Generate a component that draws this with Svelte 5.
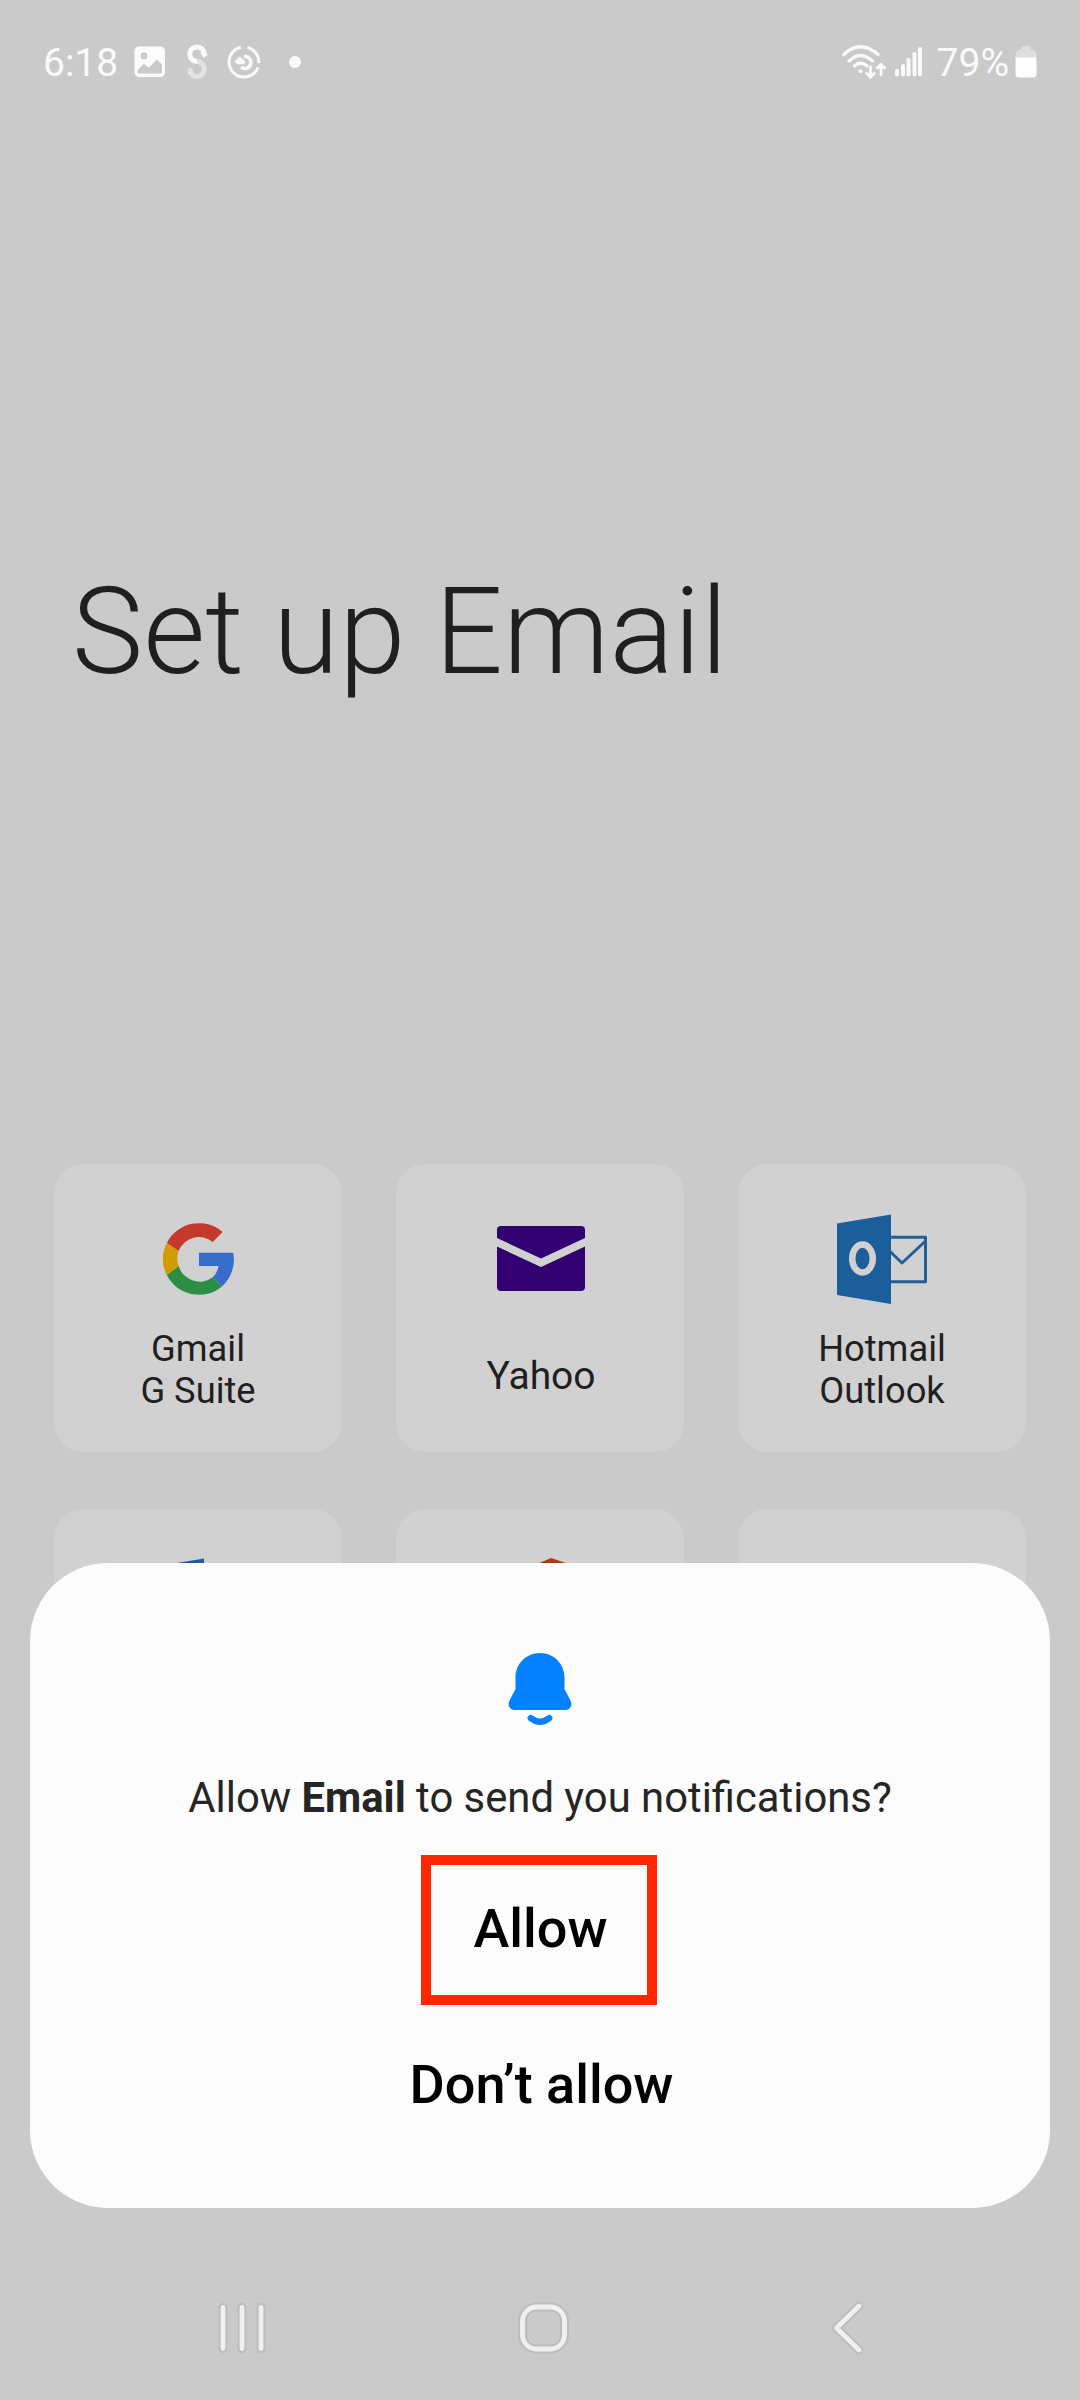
<script lang="ts">
  const providers = [
    { id: 'google', lines: ['Gmail', 'G Suite'] },
    { id: 'yahoo', lines: ['Yahoo'] },
    { id: 'outlook', lines: ['Hotmail', 'Outlook'] },
    { id: 'exchange', lines: [] },
    { id: 'office', lines: [] },
    { id: 'other', lines: [] },
  ];
</script>

<div class="screen">
  <header class="status-bar">
    <div class="status-left">
      <span class="time">6:18</span>
      <svg class="picture" width="32" height="32" viewBox="0 0 32 32">
        <path fill="#fcfcfc" fill-rule="evenodd" d="M5 0.5h21.500a4.500 4.500 0 0 1 4.500 4.500v21.500a4.500 4.500 0 0 1-4.500 4.500H5a4.500 4.500 0 0 1-4.500-4.500V5A4.500 4.500 0 0 1 5 .5zM10 6.500a3.400 3.400 0 1 0 0 6.800 3.400 3.400 0 0 0 0-6.800zM3.500 24v2q0 1.500 1.500 1.500h21.500q1.500 0 1.500-1.500V18.500l-5.300-5-8 8.200-4.700-4z"/>
      </svg>
      <svg class="swirl" width="22" height="36" viewBox="0 0 22 36">
        <path d="M11 17.500a7.500 7.500 0 1 1-3.500 14.300l-4.500-5" fill="none" stroke="#e3e3e3" stroke-width="5"/>
        <path d="M0 26.500l4-3.500 4 4z" fill="#e3e3e3"/>
        <path d="M11 17.500A7.300 7.300 0 1 1 18.300 10" fill="none" stroke="#fafafa" stroke-width="5"/>
        <path d="M14 8l8 2.500-4.500 3.500z" fill="#fafafa"/>
      </svg>
      <svg class="sync" width="34" height="34" viewBox="0 0 34 34" fill="none" stroke="#fafafa" stroke-width="3">
        <path d="M13.800 2.300A15 15 0 1 0 31 22.500M20.500 2.400A15 15 0 0 1 31.800 18"/>
        <path d="M17 11.500a6 6 0 1 1-3 10.500" stroke-width="3.600"/>
        <path d="M17.500 18.500l-4.500-4" stroke-width="3.200"/>
        <path d="M7.500 16.500l5-5 5.500 4.500-2 3-5.500.5z" fill="#fafafa" stroke="none"/>
      </svg>
      <span class="dot"></span>
    </div>
    <div class="status-right">
      <svg width="44" height="34" viewBox="0 0 44 34" fill="none" stroke="#fafafa" stroke-width="3.200" stroke-linecap="round">
        <path d="M1.800 9.500Q18.500-6 36 9.500M7 16Q18.500 5 30.500 16M12.500 21Q18.500 15.500 25 21"/>
        <circle cx="18.500" cy="26.300" r="2" fill="#fafafa" stroke="none"/>
        <path d="M28.500 22v10M24.800 28.500l3.700 3.700 3.700-3.700M39 30V19.500M35.300 23l3.700-3.700 3.700 3.700" stroke-width="2.800"/>
      </svg>
      <svg class="signal" width="28" height="30" viewBox="0 0 28 30" fill="#fafafa">
        <rect x="0" y="22" width="4" height="7.500" rx="1.800"/>
        <rect x="6" y="17" width="4" height="12.500" rx="1.800"/>
        <rect x="11.500" y="11" width="4" height="18.500" rx="1.800"/>
        <rect x="17.500" y="5" width="4" height="24.500" rx="1.800"/>
        <rect x="23" y="0" width="4" height="29.500" rx="1.800"/>
      </svg>
      <span class="percent">79%</span>
      <svg class="battery" width="22" height="32" viewBox="0 0 22 32">
        <path fill="#dedede" d="M6 4V2q0-2 2-2h6q2 0 2 2v2h1.500Q21.500 5 21.500 9v3H.5V9Q.5 5 4 4z"/>
        <path fill="#fdfdfd" d="M.5 11.500h21V28q0 3.500-3.500 3.500H4Q.5 31.500.5 28z"/>
      </svg>
    </div>
  </header>

  <h1>Set up Email</h1>

  <main class="providers">
    {#each providers as provider (provider.id)}
      <div class="card">
        <div class="icon" class:cut={provider.lines.length === 0}>
          {#if provider.id === 'google'}
            <svg width="72" height="72" viewBox="0 0 72 72">
              <path fill="#c5382c" d="M4.800 19.900A36 36 0 0 1 60.600 9L50.800 19A22 22 0 0 0 16.500 28.100z"/>
              <path fill="#d09c04" d="M4.800 19.900a36 36 0 0 0 0 32.200l11.900-8.800a22 22 0 0 1-.2-15.200z"/>
              <path fill="#2b8e44" d="M4.800 52.100A36 36 0 0 0 60 63.500L50.500 54.500A22 22 0 0 1 16.700 43.300z"/>
              <path fill="#366dcb" d="M37 29.700h34.200A36 36 0 0 1 60 63.500L50.500 54.500Q55.500 50 56.500 43H37z"/>
            </svg>
          {:else if provider.id === 'yahoo'}
            <svg class="envelope" width="88" height="65" viewBox="0 0 88 65" fill="#330072">
              <path d="M0 12V4q0-4 4-4h80q4 0 4 4v8L44 32.500z"/>
              <path d="M0 20.500L44 41l44-20.500V61q0 4-4 4H4q-4 0-4-4z"/>
            </svg>
          {:else if provider.id === 'outlook' || provider.id === 'exchange'}
            <svg class={provider.id} width="90" height="90" viewBox="0 0 90 90">
              <path d="M50 23.300h38.500v44.500H50M50 34.500l15 14.500L88 27.500" fill="none" stroke="#225f99" stroke-width="3" stroke-linejoin="round"/>
              <path fill="#1b5e9b" d="M0 9.500L54 .5v89.500L0 81z"/>
              <ellipse cx="25.500" cy="44.500" rx="10.300" ry="13.900" fill="none" stroke="#d1d1d1" stroke-width="6.500"/>
            </svg>
          {:else if provider.id === 'office'}
            <svg width="76" height="90" viewBox="0 0 76 90">
              <path fill="#ab3c18" d="M0 21L49 0l27 9v72l-27 9L0 69l49 6V16L17 24v38L0 69z"/>
            </svg>
          {/if}
        </div>
        <div class="label" class:single={provider.lines.length === 1}>
          {#each provider.lines as line}
            <span>{line}</span>
          {/each}
        </div>
      </div>
    {/each}
  </main>

  <nav class="nav-bar">
    <button aria-label="Recents">
      <svg width="56" height="60" viewBox="0 0 56 60" fill="none" stroke-linecap="round">
        <path class="edge" d="M9 9.500v41M28 9.500v41M47 9.500v41"/>
        <path class="line" d="M9 9.500v41M28 9.500v41M47 9.500v41"/>
      </svg>
    </button>
    <button aria-label="Home">
      <svg width="56" height="60" viewBox="0 0 56 60" fill="none">
        <rect class="edge" x="5.500" y="9" width="42" height="42" rx="14"/>
        <rect class="line" x="5.500" y="9" width="42" height="42" rx="14"/>
      </svg>
    </button>
    <button aria-label="Back">
      <svg width="56" height="60" viewBox="0 0 56 60" fill="none" stroke-linecap="round" stroke-linejoin="round">
        <path class="edge" d="M39 8L16.500 30 39 52"/>
        <path class="line" d="M39 8L16.500 30 39 52"/>
      </svg>
    </button>
  </nav>

  <div class="dialog" role="dialog" aria-label="Notifications">
    <svg class="bell" width="64" height="74" viewBox="0 0 64 74">
      <path fill="#0381fe" d="M32 0C18 0 7.500 11 7.500 24.500V36L1.500 47.500C-1 52.500 2 57 6.500 57h51c4.500 0 7.500-4.500 5-9.500L56.500 36V24.500C56.500 11 46 0 32 0z"/>
      <path d="M22.800 65.200Q32 72.200 41.200 65.200" fill="none" stroke="#0381fe" stroke-width="6.400" stroke-linecap="round"/>
    </svg>
    <p>Allow <b>Email</b> to send you notifications?</p>
    <button class="allow">Allow</button>
    <button class="deny">Don’t allow</button>
  </div>
</div>

<style>
:global(body) {
  background: #cacaca;
}

.screen {
  position: relative;
  display: flex;
  flex-direction: column;
  width: 1080px;
  height: 2400px;
  overflow: hidden;
  background: #cacaca;
  color: #1f1f1f;
  font-family: Roboto, sans-serif;
}

button {
  padding: 0;
  border: none;
  background: none;
  font-family: inherit;
}

svg {
  display: block;
  flex: none;
}

/* Status bar */
.status-bar {
  display: flex;
  justify-content: space-between;
  height: 124px;
  box-sizing: border-box;
  padding: 0 43px;
  color: #fafafa;
  font-size: 39px;
}

.status-left,
.status-right {
  display: flex;
  align-items: center;
  height: 124px;
}

.time,
.percent {
  padding-top: 1px;
}

.picture {
  margin-left: 16px;
}

.swirl {
  margin-left: 20px;
}

.sync {
  margin-left: 19px;
}

.dot {
  width: 12px;
  height: 12px;
  margin-left: 28px;
  border-radius: 50%;
  background: #fafafa;
}

.signal {
  margin-left: 9px;
}

.percent {
  margin-left: 14px;
}

.battery {
  margin-left: 6px;
}

/* Title */
h1 {
  margin: 438px 0 0 72px;
  font-size: 120px;
  font-weight: 300;
  line-height: 140px;
}

/* Provider cards */
.providers {
  display: grid;
  grid-template-columns: repeat(3, 288px);
  gap: 57px 54px;
  margin: 462px 54px 0;
}

.card {
  display: flex;
  flex-direction: column;
  align-items: center;
  height: 288px;
  border-radius: 30px;
  background: #d1d1d1;
}

.icon {
  display: flex;
  align-items: center;
  justify-content: center;
  height: 90px;
  margin-top: 50px;
}

.icon.cut {
  margin-top: 49px;
}

.envelope {
  margin: 0 0 2px 2px;
}

.exchange {
  margin-right: 6px;
}

.label {
  display: flex;
  flex-direction: column;
  align-items: center;
  justify-content: center;
  height: 84px;
  margin-top: 24px;
  font-size: 36.300px;
  line-height: 42px;
}

.label.single {
  font-size: 39px;
  margin-top: 30px;
  padding-left: 2px;
}

/* Navigation bar */
.nav-bar {
  display: flex;
  justify-content: space-between;
  margin: auto 204px 42px 214px;
}

.edge {
  stroke: #bdbdbd;
  stroke-width: 9;
}

.line {
  stroke: #f0f0f0;
  stroke-width: 4.800;
}

/* Permission dialog, lies over the cards */
.dialog {
  position: absolute;
  left: 30px;
  right: 30px;
  bottom: 192px;
  display: flex;
  flex-direction: column;
  align-items: center;
  height: 645px;
  border-radius: 78px;
  background: #fcfcfc;
}

.bell {
  margin-top: 90px;
}

.dialog p {
  margin: 46px 0 0;
  color: #252525;
  font-size: 41.800px;
  line-height: 50px;
}

.dialog button {
  color: #000;
  font-size: 54px;
  font-weight: 500;
  line-height: 64px;
}

.dialog .allow {
  box-sizing: border-box;
  width: 236px;
  height: 150px;
  margin: 32px 2px 0 0;
  padding: 0 0 2px 3px;
  border: 10px solid #ff2600;
}

.dialog .deny {
  margin-top: 48px;
  padding-left: 3px;
}
</style>
